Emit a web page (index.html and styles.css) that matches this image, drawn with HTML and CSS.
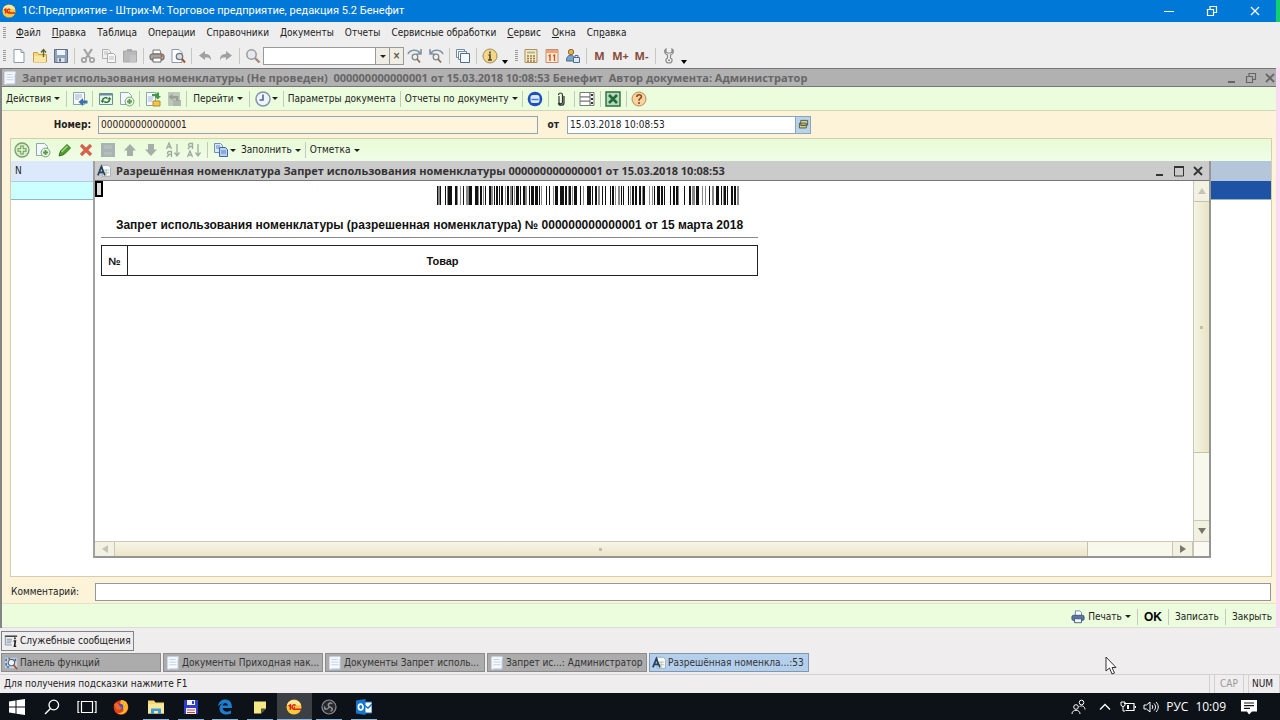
FILE: index.html
```html
<!DOCTYPE html>
<html lang="ru">
<head>
<meta charset="utf-8">
<title>1С:Предприятие</title>
<link rel="stylesheet" href="styles.css">
</head>
<body>
<svg class="defs" aria-hidden="true">
  <symbol id="logo" viewBox="0 0 16 16"><circle cx="8" cy="8" r="7.5" fill="#fdc93a"/><path d="M1 6a7.500 7.500 0 0 1 14 0z" fill="#ffe9a0"/><path d="M2.500 7l1.800-1.200v5M9.500 6.500c-1-1.300-3.500-.8-3.500 1.500s1.500 2.300 2.500 2.300H15M9 8.400H7.800" fill="none" stroke="#d8231c" stroke-width="1.500"/></symbol>
  <symbol id="page" viewBox="0 0 16 16"><path d="M3 1.500h7l3 3v10H3z" fill="#fdfeff" stroke="#8b98aa"/><path d="M10 1.500v3h3" fill="#d5e0ee" stroke="#8b98aa"/></symbol>
  <symbol id="sheet" viewBox="0 0 16 16"><path d="M2 1h12v14H2z" fill="#f7faff" stroke="#dfe6f2"/><path d="M4 4h7M4 7h8M4 10h8" stroke="#bccbe0"/><path d="M14 3v12H4" fill="none" stroke="#a4b0c4"/></symbol>
  <symbol id="open" viewBox="0 0 16 16"><path d="M1.500 14V4.500h4l1 2h8V14z" fill="#f6d780" stroke="#c9a143"/><path d="M2 8h12v6H2z" fill="#fbe6a4"/><path d="M11.500 9V2M9 4.500L11.500 1.500 14 4.500" fill="none" stroke="#5f6a20" stroke-width="1.400"/></symbol>
  <symbol id="save" viewBox="0 0 16 16"><path d="M1.500 1.500h13v13h-13z" fill="#8fa2b8" stroke="#5f7188"/><path d="M4 2h8v5H4z" fill="#eef4fa"/><path d="M4.500 10h7v4h-7z" fill="#dce5ee"/><path d="M6 10.500h2v3H6z" fill="#5f7188"/></symbol>
  <symbol id="cut" viewBox="0 0 16 16"><path d="M4 1l6 9M12 1l-6 9" stroke="#a3a3a3" stroke-width="2.200"/><circle cx="4" cy="12" r="2.200" fill="none" stroke="#a3a3a3" stroke-width="1.800"/><circle cx="12" cy="12" r="2.200" fill="none" stroke="#a3a3a3" stroke-width="1.800"/></symbol>
  <symbol id="copy" viewBox="0 0 16 16"><path d="M1.500 1.500h6l2 2v7h-8z" fill="#f2f2f2" stroke="#b0b0b0"/><path d="M6.500 5.500h6l2 2v7h-8z" fill="#f8f8f8" stroke="#a9a9a9"/><path d="M8 9h5M8 11h5M3 4h4M3 6h3" stroke="#bbb"/></symbol>
  <symbol id="paste" viewBox="0 0 16 16"><path d="M1.500 3h13v11h-13z" fill="#b9b9b9" stroke="#a8a8a8"/><path d="M5 1h5v3H5z" fill="#aaa"/><path d="M8 7h6v7H8z" fill="#c4c4c4"/></symbol>
  <symbol id="print" viewBox="0 0 16 16"><path d="M4 2h7l1 4H4z" fill="#fff" stroke="#777"/><rect x="1" y="6" width="14" height="6" rx="2" fill="#a9a4a0" stroke="#645f5c"/><path d="M4 10h8v4H4z" fill="#fff" stroke="#666"/><circle cx="12.500" cy="8" r=".9" fill="#d32"/></symbol>
  <symbol id="printblue" viewBox="0 0 16 16"><path d="M5 1h5l2 2v4H5z" fill="#fff" stroke="#5d7ca6"/><rect x="1" y="6" width="14" height="6" rx="2" fill="#5876a3" stroke="#3a5278"/><path d="M4 10h8v4.500H4z" fill="#f2f6fc" stroke="#3a5278"/></symbol>
  <symbol id="preview" viewBox="0 0 16 16"><path d="M2 1.500h7l3 3v10H2z" fill="#fdfeff" stroke="#8b98aa"/><circle cx="9.500" cy="8.500" r="3.200" fill="#cfdbe8" stroke="#777" stroke-width="1.300"/><path d="M12 11l3 3.500" stroke="#a4542f" stroke-width="2"/></symbol>
  <symbol id="undo" viewBox="0 0 16 16"><path d="M2 7.500l6-4.500v3c5 0 6 2.500 6 6.500-1-2.500-2-3-6-3V12z" fill="#a0a0a0"/></symbol>
  <symbol id="redo" viewBox="0 0 16 16"><path d="M14 7.500L8 3v3c-5 0-6 2.500-6 6.500 1-2.500 2-3 6-3V12z" fill="#a0a0a0"/></symbol>
  <symbol id="find" viewBox="0 0 16 16"><circle cx="6.500" cy="6.500" r="4.700" fill="#e4e9ee" stroke="#999" stroke-width="1.500"/><path d="M10 10l4.500 4.500" stroke="#a58a7c" stroke-width="2.400"/></symbol>
  <symbol id="findnext" viewBox="0 0 16 16"><path d="M1 6c2-4.500 9-5 12-1M14 1v5H9.500" fill="none" stroke="#7e93a3" stroke-width="1.600"/><circle cx="8" cy="9" r="2.800" fill="#edf2f5" stroke="#888" stroke-width="1.300"/><path d="M10 11l3 3.500" stroke="#8f6a55" stroke-width="1.800"/></symbol>
  <symbol id="findprev" viewBox="0 0 16 16"><path d="M15 6C13 1.500 6 1 3 5M2 1v5h4.500" fill="none" stroke="#7e93a3" stroke-width="1.600"/><circle cx="8" cy="9" r="2.800" fill="#edf2f5" stroke="#888" stroke-width="1.300"/><path d="M10 11l3 3.500" stroke="#8f6a55" stroke-width="1.800"/></symbol>
  <symbol id="windows" viewBox="0 0 16 16"><path d="M1.500 1.500h8v8h-8z" fill="#fff" stroke="#6f8aa8"/><path d="M3.500 3.500h8v8h-8z" fill="#fff" stroke="#6f8aa8"/><path d="M5.500 5.500h9v9h-9z" fill="#f4f9ff" stroke="#4d6c8e"/></symbol>
  <symbol id="info" viewBox="0 0 16 16"><circle cx="8" cy="8" r="7" fill="#f2d68a" stroke="#a38b57"/><path d="M8 3.500v2M6.500 7H8v5M6 12h4" stroke="#554a2c" stroke-width="1.700" fill="none"/></symbol>
  <symbol id="calc" viewBox="0 0 16 16"><path d="M2 1.500h12v13H2z" fill="#f7eac8" stroke="#a98f5c"/><path d="M4 3.500h8v2H4z" fill="#a9bb8c"/><path d="M4 8h2M7 8h2M10 8h2M4 10.500h2M7 10.500h2M10 10.500h2M4 13h2M7 13h2M10 13h2" stroke="#997a3e" stroke-width="1.300"/></symbol>
  <symbol id="cal" viewBox="0 0 16 16"><path d="M2 1.500h12v13H2z" fill="#fdebd4" stroke="#c48d6a"/><path d="M2 2h12v3H2z" fill="#e8a27c"/><path d="M4.500 8l1.500-1v6M9 8l1.500-1v6" fill="none" stroke="#d5532c" stroke-width="1.400"/></symbol>
  <symbol id="users" viewBox="0 0 16 16"><circle cx="6" cy="4" r="2.700" fill="#e7b04a" stroke="#8d6a2f"/><path d="M1.500 12c0-6 7-6 8-2v3h-8z" fill="#7da2c9" stroke="#4d6c8e"/><path d="M8.500 9.500h6v5h-6z" fill="#dfe9f5" stroke="#4d6c8e"/><path d="M10 9V7.500h3V9" fill="none" stroke="#4d6c8e"/></symbol>
  <symbol id="wrench" viewBox="0 0 16 16"><path d="M5 1C3 2.500 3 6 6.500 7v3C4 11 4.500 15 8 15s4-4 1.500-5V7C13 6 13 2.500 11 1v3L9.500 5h-3L5 4z" fill="#f0f0f0" stroke="#888" stroke-width="1.200"/><circle cx="8" cy="12.300" r="1" fill="#888"/></symbol>
  <symbol id="goback" viewBox="0 0 16 16"><path d="M1.500 1.500h11v12h-11z" fill="#f6fafe" stroke="#8ba0b5"/><path d="M3 4h7M3 6h7M3 8h4" stroke="#9bb0c8"/><path d="M15.500 9.500H11V7l-4.500 4 4.500 4v-2.500h4.500z" fill="#3b6fae"/></symbol>
  <symbol id="refresh" viewBox="0 0 16 16"><path d="M1.500 2.500h13v11h-13z" fill="#e7f6ea" stroke="#6d8b9c"/><path d="M2 3.500h12" stroke="#6d8b9c" stroke-width="2"/><path d="M2.500 9.500h4L4.500 12zM9.500 8.500h4L11.500 6z" fill="#1f6b2a"/><path d="M4.500 9.500c0-3 4-3.500 5-2M11.500 8.500c0 3-4 3.500-5 2" stroke="#1f6b2a" fill="none" stroke-width="1.400"/></symbol>
  <symbol id="pageadd" viewBox="0 0 16 16"><path d="M1.500 1.500h8l3 3v9h-11z" fill="#f4f8fc" stroke="#8ea3b4"/><circle cx="10.500" cy="10.500" r="4.400" fill="#eaf6e4" stroke="#76a376"/><path d="M10.500 8v5M8 10.500h5" stroke="#5c9a4f" stroke-width="1.800"/></symbol>
  <symbol id="post" viewBox="0 0 16 16"><path d="M1.500 1.500h9v13h-9z" fill="#f5f9fe" stroke="#8ea3b4"/><path d="M3 6h6M3 8h5M3 10h4" stroke="#a9b8cc"/><path d="M7 3h4.500V1.500H14V5h2l-3.300 3.500L9.500 5H7z" fill="#3f9a42"/><path d="M8 10h7v5H8z" fill="#f0c64e" stroke="#b48a25"/></symbol>
  <symbol id="unpost" viewBox="0 0 16 16"><path d="M2 1h12v14H2z" fill="#c0c8bc"/><path d="M7 9h8v6H7z" fill="#aeb6ab"/><path d="M2.500 6L6.500 2.500V5h6v5h-2.500V7.500H6.500v2z" fill="#98a095"/></symbol>
  <symbol id="clock" viewBox="0 0 16 16"><circle cx="8" cy="8" r="7" fill="#eef4fa" stroke="#8295ac" stroke-width="1.500"/><path d="M8 3.500V9H4.500" fill="none" stroke="#4c6c98" stroke-width="1.600"/></symbol>
  <symbol id="mail" viewBox="0 0 16 16"><circle cx="8" cy="8" r="7.300" fill="#1c4fc0"/><rect x="3.500" y="4" width="9" height="8" rx="2.500" fill="#dceaff"/><path d="M4.500 8.500h7" fill="none" stroke="#4a78d8" stroke-width="1.500"/></symbol>
  <symbol id="clip" viewBox="0 0 16 16"><path d="M6 5v6.500a1.800 1.800 0 0 0 3.500 0V4a2 2 0 0 0-4 0M11 5v7c0 3-5.500 3-5.500 0" fill="none" stroke="#333" stroke-width="1.200"/></symbol>
  <symbol id="list" viewBox="0 0 16 16"><path d="M1 1.500h14v13H1z" fill="#fff" stroke="#777"/><path d="M1 5.800h10M1 10.200h10M11 1v14" stroke="#777" stroke-width="1.200"/><path d="M12 4h2M12 8h2M12 12h2" stroke="#333" stroke-width="1.800"/></symbol>
  <symbol id="excel" viewBox="0 0 16 16"><path d="M1 1h14v14H1z" fill="#b9d8bd" stroke="#2c6e3d" stroke-width="1.400"/><path d="M4 4l8 8M12 4l-8 8" stroke="#1f6b35" stroke-width="2.600"/></symbol>
  <symbol id="help" viewBox="0 0 16 16"><circle cx="8" cy="8" r="7" fill="#f8d3a0" stroke="#b98b58"/><path d="M5.800 6c0-3 4.600-3 4.600-.3C10.400 7.500 8 7.500 8 9.700M8 11v2" fill="none" stroke="#8a4a20" stroke-width="1.600"/></symbol>
  <symbol id="add" viewBox="0 0 16 16"><circle cx="8" cy="8" r="7" fill="#d7efc6" stroke="#7c9c74" stroke-width="1.300"/><path d="M8 3.500v9M3.500 8h9" stroke="#6a9a58" stroke-width="3.400"/><path d="M8 4.500v7M4.500 8h7" stroke="#e9f8dc" stroke-width="1.400"/></symbol>
  <symbol id="pencil" viewBox="0 0 16 16"><path d="M2 14l1.500-5 6.500-6.500 3.500 3.500L7 12.500z" fill="#4f9f2f" stroke="#2f6e1c"/><path d="M4.500 10l6-6" stroke="#a8da84" stroke-width="1.500"/></symbol>
  <symbol id="del" viewBox="0 0 16 16"><path d="M3 3l10 10M13 3L3 13" stroke="#d5604c" stroke-width="3.200"/></symbol>
  <symbol id="savegray" viewBox="0 0 16 16"><path d="M1 1h14v14H1z" fill="#a9b3b1"/><path d="M4 3h8v4H4zM4 10h8v3H4z" fill="#b4beba"/></symbol>
  <symbol id="up" viewBox="0 0 16 16"><path d="M8 2l6 6.500h-3V14H5V8.500H2z" fill="#a5afa8"/></symbol>
  <symbol id="down" viewBox="0 0 16 16"><path d="M8 14l6-6.500h-3V2H5v5.500H2z" fill="#a5afa8"/></symbol>
  <symbol id="sortaz" viewBox="0 0 16 16"><path d="M1.500 7L4 1l2.500 6M2.500 5h3M6.500 15V9.500H4c-2 0-2 3 0 3h2.500M4 12.500L2 15M12 2v11M9.500 10.500L12 14l2.500-3.500" fill="none" stroke="#a0aaa2" stroke-width="1.300"/></symbol>
  <symbol id="sortza" viewBox="0 0 16 16"><path d="M1.500 15L4 9l2.500 6M2.500 13h3M6.500 7V1.500H4c-2 0-2 3 0 3h2.500M4 4.500L2 7M12 2v11M9.500 10.500L12 14l2.500-3.500" fill="none" stroke="#a0aaa2" stroke-width="1.300"/></symbol>
  <symbol id="copyblue" viewBox="0 0 16 16"><path d="M1.500 1.500h6l2 2v7h-8z" fill="#dce9f8" stroke="#6c8fc0"/><path d="M6.500 5.500h6l2 2v7h-8z" fill="#b9d0f0" stroke="#3f68a8"/><path d="M8 9h5M8 11h5M3 4h4M3 6h3" stroke="#5f86c0"/></symbol>
  <symbol id="adoc" viewBox="0 0 16 16"><path d="M6 1.500h7l2.500 2.500v10H6z" fill="#f7fbff" stroke="#9aa8b8"/><path d="M8 7h6M8 10h6M10.500 6v8" stroke="#a9c2a0"/><path d="M1 13L5 3l4 10M2.500 9.500h5" fill="none" stroke="#27425f" stroke-width="2"/></symbol>
  <symbol id="msg" viewBox="0 0 16 16"><path d="M1 2.500h14" stroke="#333" stroke-width="1.600"/><path d="M1.500 3v9.500H9M3 6h6M3 8h6M3 10h5" fill="none" stroke="#7c8ea4"/><path d="M12.500 4v2M11 8h2l-1 6h2" fill="none" stroke="#222" stroke-width="1.800"/></symbol>
  <symbol id="panel" viewBox="0 0 16 16"><path d="M1 2h14v12H1z" fill="#c4d6ec"/><path d="M2.500 3v3M2.500 8v3M13 3v3M5 3h2M3 12.500h3" stroke="#3c6ea8" stroke-width="1.800"/><circle cx="8.500" cy="7.500" r="3.600" fill="#eef5fb" stroke="#666" stroke-width="1.300"/><path d="M11 10.500l4 4.500" stroke="#a4542f" stroke-width="2"/></symbol>
  <symbol id="stack" viewBox="0 0 16 16"><path d="M4 2h10v7H4zM2 6h10v7H2z" fill="#d8d28e" stroke="#4e5a4a" stroke-width="1.400"/><path d="M4 9.500h6" stroke="#4e5a4a" stroke-width="1.500"/></symbol>
  <symbol id="wmin" viewBox="0 0 12 12"><path d="M2 10h7" stroke="currentColor" stroke-width="2"/></symbol>
  <symbol id="wmax" viewBox="0 0 12 12"><path d="M1.500 2v9h9V2" fill="none" stroke="currentColor"/><path d="M1 2h10" stroke="currentColor" stroke-width="2"/></symbol>
  <symbol id="wrest" viewBox="0 0 12 12"><path d="M1.500 4.500h6v6h-6zM4 4V1.500h6.500v6H8" fill="none" stroke="currentColor" stroke-width="1.200"/></symbol>
  <symbol id="wx" viewBox="0 0 12 12"><path d="M2 2l8 8M10 2l-8 8" stroke="currentColor" stroke-width="1.800"/></symbol>
  <symbol id="tmin" viewBox="0 0 12 12"><path d="M1 6.500h10" stroke="currentColor"/></symbol>
  <symbol id="tx" viewBox="0 0 12 12"><path d="M2 2l8 8M10 2l-8 8" stroke="currentColor" stroke-width="1.200"/></symbol>
  <symbol id="win" viewBox="0 0 16 16"><path d="M0 2.500l6.500-1v6H0zM7.500 1.300L16 0v7.500H7.500zM0 8.500h6.500v6L0 13.600zM7.500 8.500H16V16l-8.500-1.300z" fill="#fff"/></symbol>
  <symbol id="tsearch" viewBox="0 0 16 16"><circle cx="9.800" cy="6" r="4.800" fill="none" stroke="#fff" stroke-width="1.300"/><path d="M6.500 9.500L1 15" stroke="#fff" stroke-width="1.500"/></symbol>
  <symbol id="tview" viewBox="0 0 20 16"><path d="M4.500 2.500h11v11h-11zM2.500 2.500H1v11h1.500M17.500 2.500H19v11h-1.500" fill="none" stroke="#fff" stroke-width="1.200"/></symbol>
  <symbol id="firefox" viewBox="0 0 16 16"><circle cx="8" cy="8.500" r="7.300" fill="#e8401f"/><path d="M8 1c6-.5 8 6 6.500 9.500C13 15 8 16.500 4.500 14c5 .5 7-2 5.500-5S6 6 8 1z" fill="#ffb427"/><circle cx="7.300" cy="7.800" r="3" fill="#4a4fc4"/><path d="M1 5c1-1 2-1 4 0s1 3 4 3.500c-1 2.500-4 3-5.500 1.500" fill="#f26a22"/></symbol>
  <symbol id="folder" viewBox="0 0 16 16"><path d="M0 1.500h6l1.500 2H16v11H0z" fill="#f7d774"/><path d="M0 5h16v9.500H0z" fill="#fde89a"/><path d="M3 15V9.500h10V15h-3v-3H6v3z" fill="#3aa0dc"/></symbol>
  <symbol id="floppy" viewBox="0 0 16 16"><path d="M1 1h14v14H1z" fill="#2d3fc8"/><path d="M4 1h8v5H4zM3 9h10v6H3z" fill="#f2f2fa"/><path d="M9 2h2v3H9z" fill="#2d3fc8"/><path d="M4 11h8M4 13.500h8" stroke="#d33a3a"/></symbol>
  <symbol id="edge" viewBox="0 0 16 16"><path d="M1 7.500C2 2 5 .5 8.500.5 13 .5 15 4 15 9H5.500c.5 4 5.500 4.500 8.500 2.500v3c-5 2.500-11.500.5-11.500-5C2.500 7 4 5 6.500 4.200 3.500 4.500 2 6 1 7.500zM5.600 6.500h5.200c0-3.500-4.800-3.500-5.200 0z" fill="#1b7fd6"/></symbol>
  <symbol id="note" viewBox="0 0 16 16"><path d="M2 2.500h12v7l-5 5H2z" fill="#f5e887"/><path d="M14 9.500H9v5z" fill="#5a5430"/></symbol>
  <symbol id="obs" viewBox="0 0 16 16"><circle cx="8" cy="8" r="7" fill="#26282b" stroke="#8b8f94" stroke-width="1.200"/><path d="M8 8c-2-4 2-5 3-3M8 8c4 0 4 4 1.500 4M8 8c-2 4-5.500 2-4-.5" fill="none" stroke="#8b8f94" stroke-width="1.600"/></symbol>
  <symbol id="outlook" viewBox="0 0 16 16"><path d="M8 3h8v11H8z" fill="#fff" stroke="#0f6fc6"/><path d="M8 6l4 3 4-4" fill="none" stroke="#0f6fc6" stroke-width="1.400"/><path d="M0 1.500L9.500 0v16L0 14.500z" fill="#1377d0"/><ellipse cx="4.700" cy="8" rx="2.300" ry="2.900" fill="none" stroke="#fff" stroke-width="1.700"/></symbol>
  <symbol id="people" viewBox="0 0 16 16"><circle cx="6" cy="8" r="2.300" fill="none" stroke="#fff"/><path d="M2 15c0-5 8-5 8 0" fill="none" stroke="#fff"/><circle cx="11.500" cy="3.500" r="2.300" fill="none" stroke="#fff"/><path d="M9.500 7.500c2.500-1.500 5.500 0 5.500 3" fill="none" stroke="#fff"/></symbol>
  <symbol id="chev" viewBox="0 0 16 16"><path d="M3 10.500l5-5 5 5" fill="none" stroke="#fff" stroke-width="1.300"/></symbol>
  <symbol id="battery" viewBox="0 0 16 16"><path d="M4 4.500h10v7H5.500M15.500 7v2" fill="none" stroke="#fff" stroke-width="1.200"/><path d="M1 3v3c0 2 4 2 4 0V3zM3 7.500V12h2" fill="none" stroke="#fff"/><path d="M7 6h2v4H7z" fill="#fff"/></symbol>
  <symbol id="sound" viewBox="0 0 16 16"><path d="M1 6h2.500L7 3v10L3.500 10H1z" fill="none" stroke="#fff"/><path d="M9 6c1 1 1 3 0 4M11 4.500c2 2 2 5 0 7M13 3c3 3 3 7 0 10" fill="none" stroke="#fff"/></symbol>
  <symbol id="notif" viewBox="0 0 16 16"><path d="M0 1h16v11.500h-5L8 15.500l-2-3H0z" fill="#fff"/><path d="M3 4h10M3 6.700h10M3 9.400h6" stroke="#12161c" stroke-width="1.200"/></symbol>
</svg>

<header class="titlebar">
  <svg class="ic14"><use href="#logo"/></svg>
  <h1>1С:Предприятие - Штрих-М: Торговое предприятие, редакция 5.2 Бенефит</h1>
  <div class="winctl">
    <button aria-label="Свернуть"><svg class="ic12"><use href="#tmin"/></svg></button>
    <button aria-label="Восстановить"><svg class="ic12"><use href="#wrest"/></svg></button>
    <button aria-label="Закрыть"><svg class="ic12"><use href="#tx"/></svg></button>
  </div>
</header>

<nav class="menu">
  <span class="grip"></span>
  <button><u>Ф</u>айл</button><button><u>П</u>равка</button><button>Таблица</button><button>Операции</button><button>Справочники</button><button>Документы</button><button>Отчеты</button><button>Сервисные обработки</button><button><u>С</u>ервис</button><button><u>О</u>кна</button><button>Сп<u>р</u>авка</button>
</nav>

<div class="maintools">
  <span class="grip"></span>
  <button class="tb" aria-label="Новый"><svg><use href="#page"/></svg></button>
  <button class="tb" aria-label="Открыть"><svg><use href="#open"/></svg></button>
  <button class="tb" aria-label="Сохранить"><svg><use href="#save"/></svg></button>
  <i class="sep"></i>
  <button class="tb" aria-label="Вырезать"><svg><use href="#cut"/></svg></button>
  <button class="tb" aria-label="Копировать"><svg><use href="#copy"/></svg></button>
  <button class="tb" aria-label="Вставить"><svg><use href="#paste"/></svg></button>
  <i class="sep"></i>
  <button class="tb" aria-label="Печать"><svg><use href="#print"/></svg></button>
  <button class="tb" aria-label="Просмотр"><svg><use href="#preview"/></svg></button>
  <i class="sep"></i>
  <button class="tb" aria-label="Отменить"><svg><use href="#undo"/></svg></button>
  <button class="tb" aria-label="Вернуть"><svg><use href="#redo"/></svg></button>
  <i class="sep"></i>
  <button class="tb" aria-label="Найти"><svg><use href="#find"/></svg></button>
  <div class="search"><input type="text" aria-label="Поиск"><button aria-label="Список"><i class="arr"></i></button><button aria-label="Очистить">×</button></div>
  <button class="tb" aria-label="Найти далее"><svg><use href="#findnext"/></svg></button>
  <button class="tb" aria-label="Найти назад"><svg><use href="#findprev"/></svg></button>
  <i class="sep"></i>
  <button class="tb" aria-label="Окна"><svg><use href="#windows"/></svg></button>
  <i class="sep"></i>
  <button class="tb" aria-label="Информация"><svg><use href="#info"/></svg></button>
  <i class="more"></i>
  <span class="grip"></span>
  <button class="tb" aria-label="Калькулятор"><svg><use href="#calc"/></svg></button>
  <button class="tb" aria-label="Календарь"><svg><use href="#cal"/></svg></button>
  <button class="tb" aria-label="Пользователи"><svg><use href="#users"/></svg></button>
  <i class="sep"></i>
  <button class="tb mem">M</button><button class="tb mem">M+</button><button class="tb mem">M-</button>
  <i class="sep"></i>
  <button class="tb" aria-label="Настройка"><svg><use href="#wrench"/></svg></button>
  <i class="more"></i>
</div>

<main class="doc">
  <div class="doctitle">
    <svg class="ic14"><use href="#sheet"/></svg>
    <h2>Запрет использования номенклатуры (Не проведен)&nbsp; 000000000000001 от 15.03.2018 10:08:53 Бенефит&nbsp; Автор документа: Администратор</h2>
    <div class="subctl">
      <button aria-label="Свернуть"><svg class="ic12"><use href="#wmin"/></svg></button>
      <button aria-label="Восстановить"><svg class="ic12"><use href="#wrest"/></svg></button>
      <button aria-label="Закрыть"><svg class="ic12"><use href="#wx"/></svg></button>
    </div>
  </div>

  <div class="doctools">
    <button class="tx">Действия<i class="arr"></i></button>
    <i class="sep"></i>
    <button class="tb" aria-label="Перейти к списку"><svg><use href="#goback"/></svg></button>
    <i class="sep"></i>
    <button class="tb" aria-label="Обновить"><svg><use href="#refresh"/></svg></button>
    <button class="tb" aria-label="Скопировать"><svg><use href="#pageadd"/></svg></button>
    <i class="sep"></i>
    <button class="tb" aria-label="Провести"><svg><use href="#post"/></svg></button>
    <button class="tb" aria-label="Отмена проведения"><svg><use href="#unpost"/></svg></button>
    <i class="sep"></i>
    <button class="tx">Перейти<i class="arr"></i></button>
    <i class="sep"></i>
    <button class="tb drop" aria-label="История"><svg><use href="#clock"/></svg><i class="arr"></i></button>
    <i class="sep"></i>
    <button class="tx slim">Параметры документа</button>
    <i class="sep"></i>
    <button class="tx slim">Отчеты по документу<i class="arr"></i></button>
    <i class="sep"></i>
    <button class="tb" aria-label="Почта"><svg><use href="#mail"/></svg></button>
    <i class="sep"></i>
    <button class="tb" aria-label="Файлы"><svg><use href="#clip"/></svg></button>
    <i class="sep"></i>
    <button class="tb" aria-label="Список"><svg><use href="#list"/></svg></button>
    <i class="sep"></i>
    <button class="tb" aria-label="Excel"><svg><use href="#excel"/></svg></button>
    <i class="sep"></i>
    <button class="tb" aria-label="Справка"><svg><use href="#help"/></svg></button>
  </div>

  <div class="fields">
    <label class="l1" for="num">Номер:</label>
    <input id="num" class="num" type="text" value="000000000000001">
    <label class="l2" for="date">от</label>
    <div class="date"><input id="date" type="text" value="15.03.2018 10:08:53"><button aria-label="Выбрать дату"><svg><use href="#stack"/></svg></button></div>
  </div>

  <section class="panel">
    <div class="gridtools">
      <div class="icons">
        <button aria-label="Добавить"><svg><use href="#add"/></svg></button>
        <button aria-label="Скопировать"><svg><use href="#pageadd"/></svg></button>
        <button aria-label="Изменить"><svg><use href="#pencil"/></svg></button>
        <button aria-label="Удалить"><svg><use href="#del"/></svg></button>
        <button aria-label="Сохранить"><svg><use href="#savegray"/></svg></button>
        <button aria-label="Вверх"><svg><use href="#up"/></svg></button>
        <button aria-label="Вниз"><svg><use href="#down"/></svg></button>
        <button aria-label="По возрастанию"><svg><use href="#sortaz"/></svg></button>
        <button aria-label="По убыванию"><svg><use href="#sortza"/></svg></button>
      </div>
      <i class="sep"></i>
      <button class="tb drop" aria-label="Копировать"><svg><use href="#copyblue"/></svg><i class="arr"></i></button>
      <button class="tx slim">Заполнить<i class="arr"></i></button>
      <i class="sep"></i>
      <button class="tx slim">Отметка<i class="arr"></i></button>
    </div>
    <div class="gridarea">
      <table class="rows">
        <thead><tr><th class="n">N</th><th></th></tr></thead>
        <tbody><tr><td class="n"></td><td></td></tr></tbody>
      </table>

      <section class="float">
        <div class="floattitle">
          <svg class="ic14"><use href="#adoc"/></svg>
          <h2>Разрешённая номенклатура Запрет использования номенклатуры 000000000000001 от 15.03.2018 10:08:53</h2>
          <div class="subctl">
            <button aria-label="Свернуть"><svg class="ic12"><use href="#wmin"/></svg></button>
            <button aria-label="Развернуть"><svg class="ic12"><use href="#wmax"/></svg></button>
            <button aria-label="Закрыть"><svg class="ic12"><use href="#wx"/></svg></button>
          </div>
        </div>
        <div class="floatbody">
          <div class="sheet">
            <div class="report">
              <svg class="barcode" viewBox="437 0 302 19" role="img" aria-label="Штрихкод">
                <path stroke="#111" stroke-width="38" d="M437 0h1M440 0h1M445 0h1M448 0h4M455 0h2M463 0h1M469 0h3M475 0h3M480 0h2M485 0h1M489 0h2M494 0h1M496 0h2M499 0h1M501 0h2M507 0h2M512 0h1M516 0h3M520 0h1M523 0h2M529 0h1M531 0h3M535 0h3M539 0h1M546 0h1M549 0h1M555 0h3M560 0h4M565 0h2M569 0h2M574 0h3M580 0h1M587 0h4M592 0h1M595 0h2M602 0h1M605 0h1M610 0h1M612 0h2M621 0h1M623 0h1M628 0h1M632 0h2M635 0h2M639 0h2M643 0h2M654 0h1M657 0h3M661 0h2M664 0h1M670 0h1M673 0h2M676 0h2M684 0h1M689 0h2M696 0h3M709 0h1M716 0h3M721 0h1M724 0h2M727 0h1M731 0h2M734 0h2"/>
                <path stroke="#888" stroke-width="38" d="M438 0h2M447 0h1M457 0h1M460 0h1M466 0h3M478 0h1M483 0h1M491 0h2M505 0h1M510 0h2M514 0h1M525 0h2M541 0h1M553 0h1M568 0h1M572 0h1M583 0h1M598 0h2M615 0h1M618 0h2M630 0h1M642 0h1M649 0h1M652 0h1M678 0h1M692 0h3M702 0h1M705 0h1M712 0h2M723 0h1M737 0h2"/>
              </svg>
              <h3>Запрет использования номенклатуры (разрешенная номенклатура) № 000000000000001 от 15 марта 2018</h3>
              <table class="goods"><tr><th class="no">№</th><th>Товар</th></tr></table>
            </div>
            <span class="cellcur"></span>
          </div>
          <div class="vs"><button aria-label="Вверх"><i class="tri u"></i></button><div class="thumb"></div><div class="track"></div><button aria-label="Вниз"><i class="tri d"></i></button></div>
          <div class="hs"><button aria-label="Влево"><i class="tri l"></i></button><div class="thumb"></div><div class="track"></div><button aria-label="Вправо"><i class="tri r"></i></button></div>
          <div class="corner"></div>
        </div>
      </section>
    </div>
  </section>

  <div class="comment"><label for="com">Комментарий:</label><input id="com" type="text"></div>

  <div class="actions">
    <button class="tx"><svg class="ic14"><use href="#printblue"/></svg>Печать<i class="arr"></i></button>
    <i class="sep"></i>
    <button class="tx ok">OK</button>
    <i class="sep"></i>
    <button class="tx">Записать</button>
    <i class="sep"></i>
    <button class="tx">Закрыть</button>
  </div>
</main>

<div class="messages"><button><svg class="ic14"><use href="#msg"/></svg>Служебные сообщения</button></div>

<div class="tabs">
  <button><svg class="ic14"><use href="#panel"/></svg>Панель функций</button>
  <button><svg class="ic14"><use href="#sheet"/></svg>Документы Приходная нак...</button>
  <button><svg class="ic14"><use href="#sheet"/></svg>Документы Запрет исполь...</button>
  <button><svg class="ic14"><use href="#sheet"/></svg>Запрет ис...: Администратор</button>
  <button class="on"><svg class="ic14"><use href="#adoc"/></svg>Разрешённая номенкла...:53</button>
</div>

<footer class="status"><span class="hint">Для получения подсказки нажмите F1</span><span class="cap">CAP</span><span class="numl">NUM</span></footer>

<div class="taskbar">
  <div class="apps">
    <button aria-label="Пуск"><svg><use href="#win"/></svg></button>
    <button aria-label="Поиск"><svg><use href="#tsearch"/></svg></button>
    <button aria-label="Представление задач"><svg class="wide"><use href="#tview"/></svg></button>
    <button aria-label="Firefox"><svg><use href="#firefox"/></svg></button>
    <button class="run" aria-label="Проводник"><svg><use href="#folder"/></svg></button>
    <button class="run" aria-label="Диск"><svg><use href="#floppy"/></svg></button>
    <button class="run" aria-label="Edge"><svg><use href="#edge"/></svg></button>
    <button class="run" aria-label="Заметки"><svg><use href="#note"/></svg></button>
    <button class="run active" aria-label="1С"><svg><use href="#logo"/></svg></button>
    <button class="run" aria-label="OBS"><svg><use href="#obs"/></svg></button>
    <button class="run" aria-label="Outlook"><svg><use href="#outlook"/></svg></button>
  </div>
  <div class="tray">
    <svg class="ppl"><use href="#people"/></svg>
    <svg><use href="#chev"/></svg>
    <svg><use href="#battery"/></svg>
    <svg><use href="#sound"/></svg>
    <span>РУС</span>
    <span>10:09</span>
    <svg class="ntf"><use href="#notif"/></svg>
  </div>
</div>

<svg class="cursor" viewBox="0 0 12 19"><path d="M1 1v14l3.500-3 2.500 6 2.500-1-2.500-5.500H11z" fill="#fff" stroke="#333"/></svg>
</body>
</html>
```
FILE: styles.css
```css
* { box-sizing: border-box; }
body {
  margin: 0;
  height: 100vh;
  display: flex;
  flex-direction: column;
  position: relative;
  overflow: hidden;
  background: #efedee;
  color: #222;
  font: 10px/14px "DejaVu Sans Condensed", "DejaVu Sans", sans-serif;
}
h1, h2, h3 { margin: 0; white-space: nowrap; }
button {
  border: 0;
  padding: 0;
  background: none;
  color: inherit;
  font: inherit;
  white-space: nowrap;
}
input { font: inherit; color: inherit; min-width: 0; border-radius: 0; outline: 0; }
svg { display: block; flex: none; }
.defs { position: absolute; width: 0; height: 0; }
.ic14 { width: 14px; height: 14px; }
.ic12 { width: 12px; height: 12px; }

.titlebar {
  flex: none;
  height: 22px;
  display: flex;
  align-items: center;
  gap: 6px;
  padding-left: 2px;
  background: #0078d7;
  border-right: 4px solid #10d070;
  color: #fff;
}
.titlebar h1 { flex: 1; font: 11px/14px Roboto, sans-serif; }
.winctl { display: flex; }
.winctl button { width: 43px; height: 20px; display: grid; place-items: center; }

.menu, .maintools { flex: none; display: flex; align-items: center; background: #eeeeee; }
.menu { height: 22px; gap: 1px; }
.menu button { padding: 0 5px; }
.menu .grip { margin-right: 4px; }
.maintools { height: 24px; }
.grip {
  flex: none;
  width: 3px;
  height: 12px;
  margin: 0 2px 0 3px;
  background: repeating-linear-gradient(#999 0 1px, #eee 1px 2px);
}
.tb { flex: none; width: 21px; height: 20px; display: flex; align-items: center; justify-content: center; }
.tb svg { width: 16px; height: 16px; }
.tb.mem { color: #8a4a38; font: bold 11px/14px "Open Sans", sans-serif; }
.sep {
  flex: none;
  width: 7px;
  height: 16px;
  background: linear-gradient(#c4c8c0, #c4c8c0) center / 1px 100% no-repeat;
}
.maintools .sep { width: 6px; }
.arr {
  flex: none;
  border: 3px solid transparent;
  border-top-color: #222;
  border-bottom: 0;
}
.more { flex: none; align-self: flex-end; margin: 0 4px 4px 2px; border: 3px solid transparent; border-top: 4px solid #000; border-bottom: 0; }
.search { width: 141px; height: 18px; display: flex; border: 1px solid #999; background: #fff; }
.search input { flex: 1; border: 0; padding: 0 2px; background: #fff; }
.search button {
  width: 14px;
  display: grid;
  place-items: center;
  border-left: 1px solid #999;
  background: #f0eee4;
  color: #554;
  font-weight: bold;
}

.doc {
  flex: 1;
  min-height: 0;
  display: flex;
  flex-direction: column;
  background: #fcf3d9;
  border-left: 2px solid #858585;
  border-right: 4px solid #fbd9f3;
}
.doctitle {
  flex: none;
  height: 19px;
  display: flex;
  align-items: center;
  gap: 5px;
  padding-left: 1px;
  background: #b1b1b1;
  border-top: 1px solid #777;
  border-bottom: 1px solid #777;
  color: #666;
}
.doctitle h2 { flex: 1; font: bold 11px/14px "Open Sans", sans-serif; }
.subctl { display: flex; gap: 7px; }
.doctools {
  flex: none;
  height: 24px;
  display: flex;
  align-items: center;
  background: #ecfddd;
  border-bottom: 1px solid #cfd6b8;
}
.doctools .sep, .gridtools .sep, .actions .sep { width: 5px; }
.tx { display: flex; align-items: center; gap: 3px; padding: 0 4px; height: 20px; }
.tx.slim { padding: 0 2px; }
.tb.drop { width: 29px; gap: 1px; }

.fields { flex: none; height: 27px; display: flex; align-items: center; }
.fields label { font-weight: bold; color: #222; text-align: right; }
.fields .l1 { width: 89px; margin-right: 7px; }
.fields .l2 { width: 21px; margin-right: 8px; }
.fields input { height: 18px; border: 1px solid #8fa5b5; padding: 0 2px; }
.fields .num { width: 440px; background: #fff5dc; }
.date { display: flex; width: 244px; }
.date input { flex: 1; background: #fff; }
.date button { width: 15px; display: grid; place-items: center; background: #b9d3ea; border: 1px solid #8fa5b5; border-left: 0; }
.date svg { width: 11px; height: 11px; }

.panel {
  flex: 1;
  min-height: 0;
  margin: 0 4px 0 8px;
  display: flex;
  flex-direction: column;
  border: 1px solid #d6cdae;
  background: #fff;
}
.gridtools {
  flex: none;
  height: 22px;
  display: flex;
  align-items: center;
  background: linear-gradient(#e8fbd6, #f0fde8);
}
.icons { width: 194px; display: flex; }
.icons button { flex: 1; display: grid; place-items: center; }
.icons svg { width: 16px; height: 16px; }
.gridarea { flex: 1; min-height: 0; position: relative; }
.rows { width: 100%; border-collapse: collapse; table-layout: fixed; }
.rows th { height: 20px; padding: 0 4px; text-align: left; font-weight: normal; background: #b5c6da; }
.rows td { height: 18px; padding: 0; background: #1e52a4; border-bottom: 1px solid #8fb8c4; }
.rows .n { width: 83px; }
.rows th.n { background: #dce8fb; border-bottom: 1px solid #b4cbd8; }
.rows td.n { background: #ccffff; }

.float {
  position: absolute;
  top: 0;
  left: 82px;
  right: 60px;
  bottom: 18px;
  display: flex;
  flex-direction: column;
  border: 2px solid #a0a0a0;
  border-top: 0;
  border-bottom-color: #959595;
  border-right-color: #959595;
  background: #fff;
}
.floattitle {
  flex: none;
  height: 20px;
  display: flex;
  align-items: center;
  gap: 5px;
  padding: 0 5px 0 2px;
  background: #cbcbcb;
  border-bottom: 1px solid #777;
  color: #333;
}
.floattitle h2 { flex: 1; font: bold 11px/14px "Open Sans", sans-serif; }
.floatbody { flex: 1; min-height: 0; display: grid; grid-template: 1fr 15px / 1fr 16px; }
.sheet { position: relative; overflow: hidden; padding: 5px 6px; }
.report { width: 657px; color: #111; font-family: "Liberation Sans", Arial, sans-serif; }
.barcode { width: 302px; height: 19px; margin-left: 336px; }
.report h3 {
  padding: 13px 0 5px;
  margin-bottom: 7px;
  border-bottom: 1px solid #888;
  text-align: center;
  font: bold 12px/14px "Liberation Sans", Arial, sans-serif;
}
.goods { width: 100%; border-collapse: collapse; }
.goods th { height: 30px; padding: 0; border: 1px solid #222; font-size: 11px; }
.goods .no { width: 26px; }
.cellcur { position: absolute; left: 0; top: 0; width: 8px; height: 16px; border: 2px solid #000; background: #ddd; }
.vs, .hs { display: flex; background: #f8f8ec; }
.vs { flex-direction: column; border-left: 1px solid #c8c8b8; }
.hs { border-top: 1px solid #c8c8b8; }
.corner { background: #fafaf2; border-left: 1px solid #c8c8b8; border-top: 1px solid #c8c8b8; }
.vs button { height: 20px; display: grid; place-items: center; background: #f3f2e2; }
.hs button { width: 20px; display: grid; place-items: center; background: #f3f2e2; border-right: 1px solid #c8c8b8; }
.vs .thumb, .hs .thumb { display: grid; place-items: center; }
.vs .thumb::after, .hs .thumb::after { content: ""; width: 3px; height: 3px; background: #c4c0a4; }
.vs .thumb { flex: 79; background: linear-gradient(90deg, #f6f4e4, #e8e3c2); border: 1px solid #c4c2a8; border-width: 1px 0; }
.vs .track { flex: 21; border-bottom: 1px solid #c8c8b8; }
.hs .thumb { flex: 92; background: linear-gradient(#f8f5e8, #ece5c8); border-right: 1px solid #c4c2a8; }
.hs .track { flex: 8; border-right: 1px solid #c8c8b8; }
.tri { border: 4px solid transparent; }
.tri.u { border-top: 0; border-bottom: 6px solid #c4c4b6; }
.tri.d { border-bottom: 0; border-top: 6px solid #77776c; }
.tri.l { border-left: 0; border-right: 6px solid #c4c4b6; }
.tri.r { border-right: 0; border-left: 6px solid #77776c; }

.comment { flex: none; height: 27px; display: flex; align-items: center; padding: 3px 5px 0 9px; border-bottom: 1px solid #e4e4c4; }
.comment label { width: 84px; }
.comment input { flex: 1; height: 18px; border: 1px solid #8c9c9c; background: #fff; }
.actions { flex: none; height: 24px; display: flex; align-items: center; justify-content: flex-end; padding-top: 2px; background: #ecfddd; border-bottom: 1px solid #dcdcd4; }
.actions .ok { font: bold 12px/14px "Liberation Sans", Arial, sans-serif; color: #000; }

.messages { flex: none; height: 24px; padding: 3px 1px 1px; display: flex; }
.messages button { height: 20px; display: flex; align-items: center; gap: 2px; padding: 0 2px; border: 1px solid #7c8484; }
.tabs { flex: none; height: 22px; display: flex; align-items: flex-start; gap: 2px; padding: 1px 1px 0; }
.tabs button {
  width: 160px;
  height: 19px;
  display: flex;
  align-items: center;
  gap: 2px;
  padding: 0 2px;
  background: #acacac;
  border: 1px solid #8c8c8c;
  overflow: hidden;
  color: #333;
}
.tabs .on { background: #b3cfec; border-color: #7f98b0; }
.status { flex: none; height: 19px; display: flex; gap: 4px; border-top: 1px solid #d2d0d1; }
.status span { border-right: 1px solid #d2d0d1; line-height: 18px; }
.status .hint { flex: 1; padding-left: 4px; }
.status .cap { width: 30px; text-align: center; color: #999; border-left: 1px solid #d2d0d1; }
.status .numl { width: 32px; border-left: 1px solid #d2d0d1; padding-left: 3px; }

.taskbar { flex: none; height: 27px; display: flex; justify-content: space-between; background: #0d1218; color: #fff; }
.apps { width: 381px; display: flex; }
.apps button { flex: 1; display: grid; place-items: center; }
.apps svg { width: 16px; height: 16px; }
.apps .wide { width: 20px; }
.apps .run { background: linear-gradient(#86b4dc, #86b4dc) center bottom / 26px 1px no-repeat; }
.apps .active { background-color: #3c4045; background-size: 100% 1px; }
.tray { display: flex; align-items: center; gap: 7px; padding-right: 23px; font: 12px/14px "Open Sans", sans-serif; }
.tray svg { width: 16px; height: 16px; }
.tray .ppl { margin-right: 4px; }
.tray .ntf { margin-left: 8px; }

.cursor { position: absolute; left: 1105px; top: 656px; width: 12px; height: 19px; }
```
